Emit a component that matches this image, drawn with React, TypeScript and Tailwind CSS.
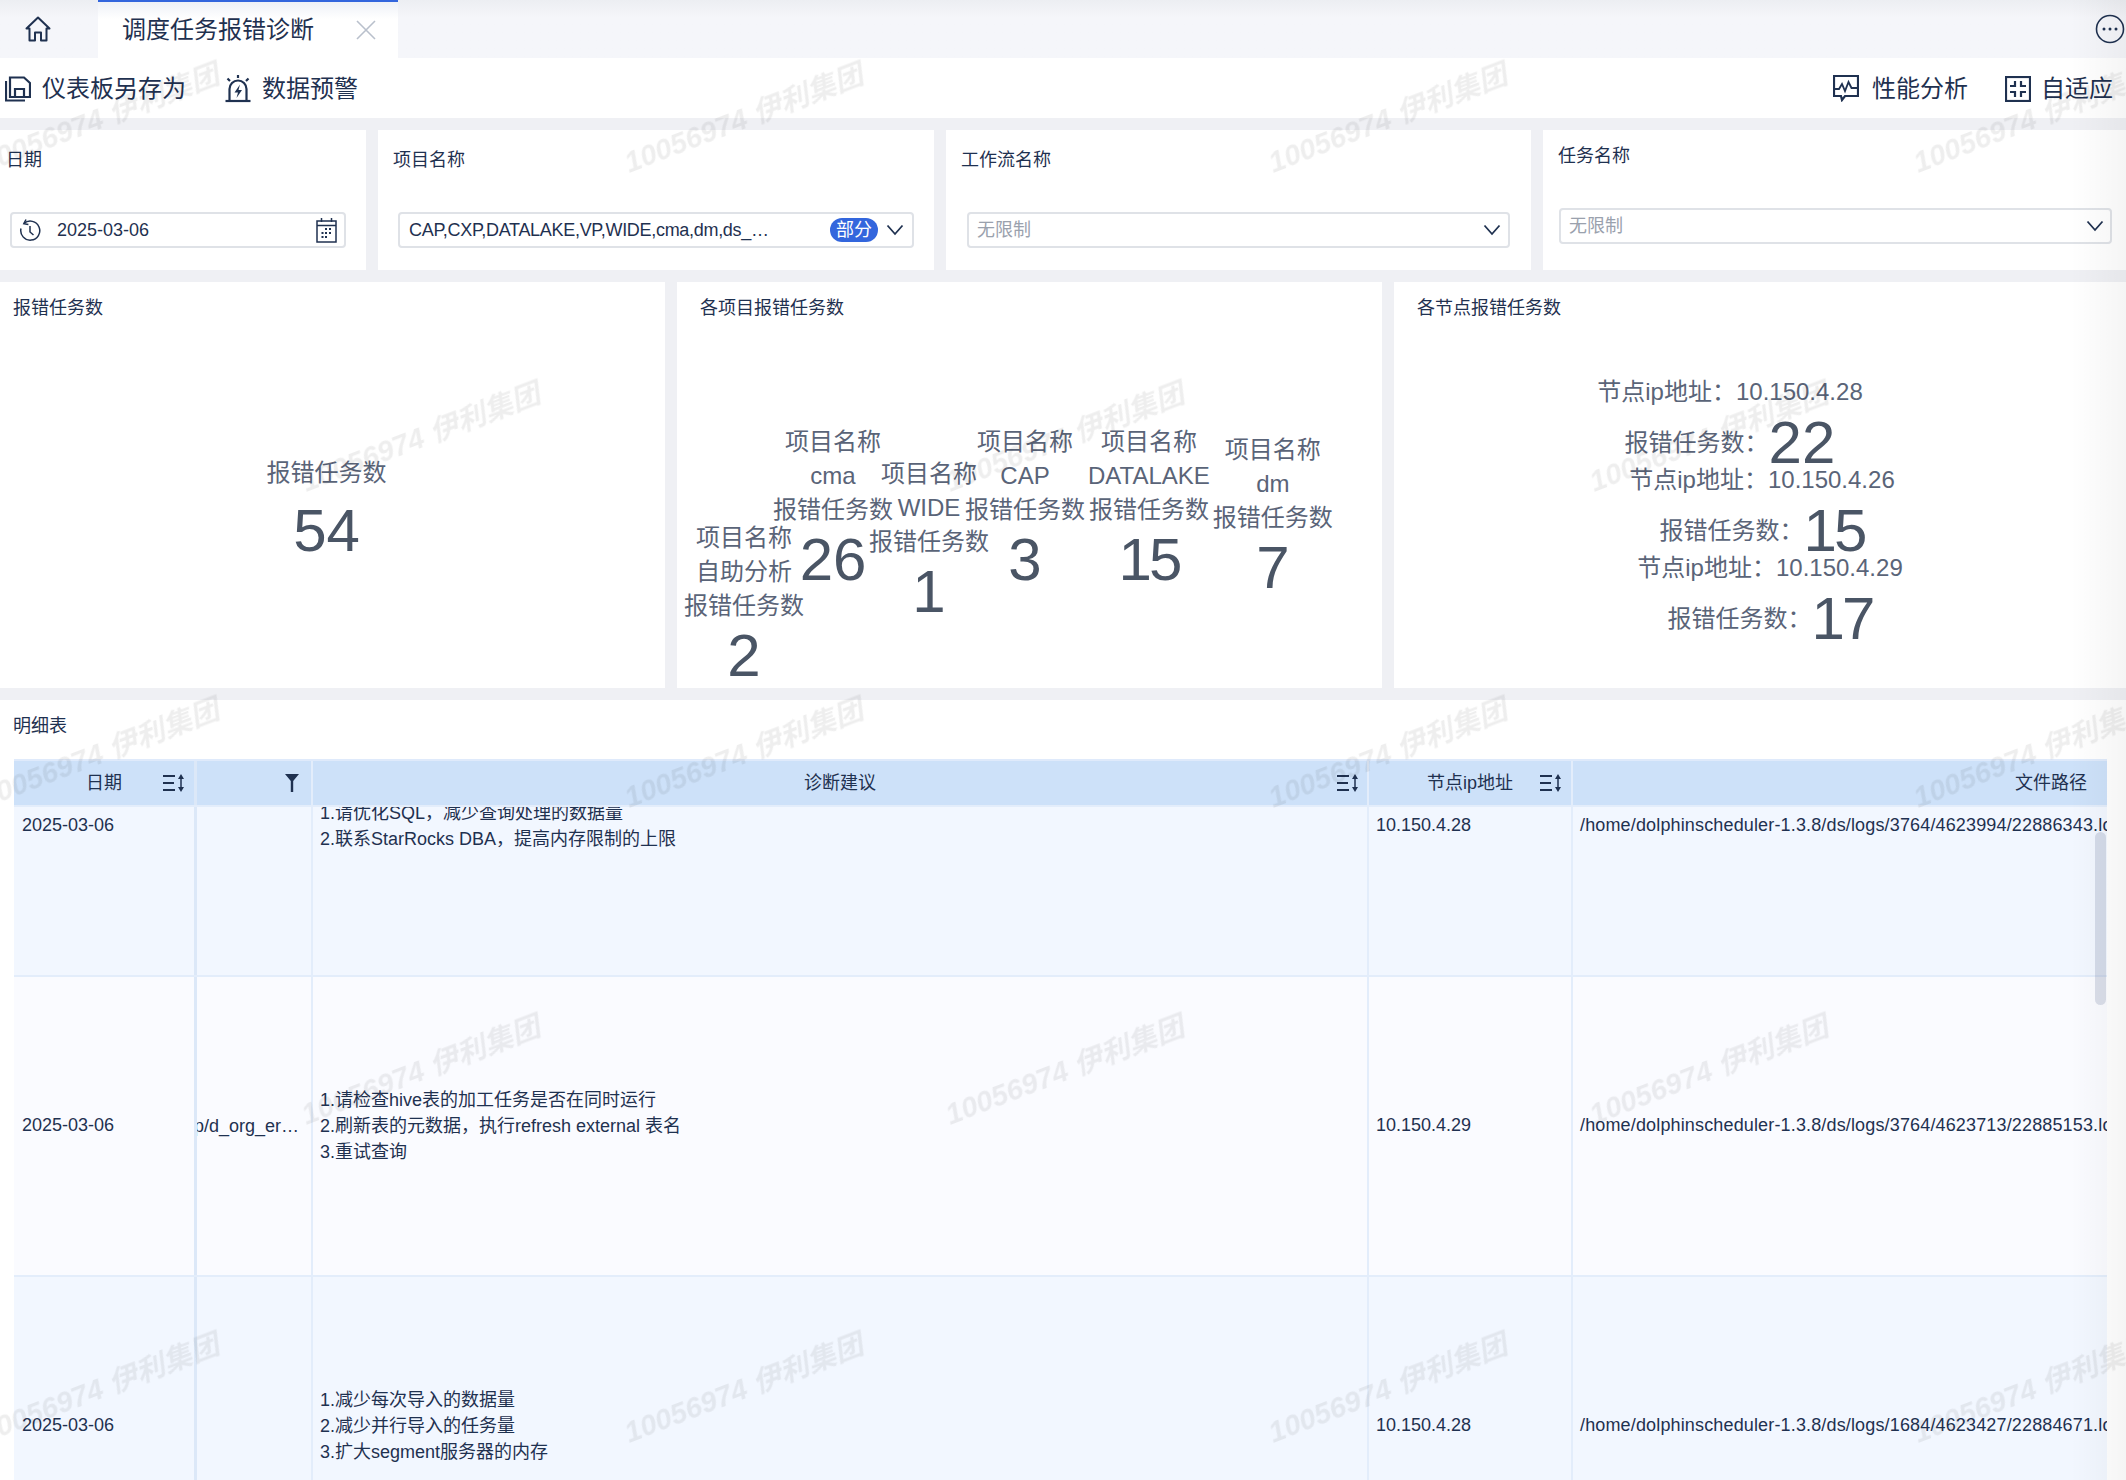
import React from 'react';

const INK = '#1f3150';

const HomeIcon = () => (
  <svg width="28" height="28" viewBox="0 0 28 28" fill="none" stroke={INK} strokeWidth="2">
    <path d="M2.5 13.5 14 2.5l11.5 11H22.5v12h-5.5v-8h-6v8H5.500v-12z" strokeLinejoin="round" />
  </svg>
);

const CloseIcon = () => (
  <svg width="20" height="20" viewBox="0 0 20 20" stroke="#b9c0cc" strokeWidth="1.6">
    <path d="M1 1l18 18M19 1 1 19" />
  </svg>
);

const MoreIcon = () => (
  <svg width="30" height="30" viewBox="0 0 30 30" fill="none">
    <circle cx="15" cy="15" r="13.500" stroke={INK} strokeWidth="1.600" />
    <circle cx="9" cy="15" r="1.500" fill={INK} />
    <circle cx="15" cy="15" r="1.500" fill={INK} />
    <circle cx="21" cy="15" r="1.500" fill={INK} />
  </svg>
);

const SaveAsIcon = () => (
  <svg width="26" height="26" viewBox="0 0 26 26" fill="none" stroke={INK} strokeWidth="2.200">
    <path d="M5 21V1.500h14L25 7v14z" />
    <path d="M10 21v-8h9v8" />
    <path d="M1 5v19.500h19" />
  </svg>
);

const AlarmIcon = () => (
  <svg width="26" height="28" viewBox="0 0 26 28" fill="none" stroke={INK} strokeWidth="2.200">
    <path d="M4.500 25V14a8.500 8.500 0 0 1 17 0v11" />
    <path d="M0.500 26h25" />
    <path d="M13 0v3M2.500 3.500 5 6M23.500 3.500 21 6" />
    <path d="M15 9.500 9.500 17.500h3.500L11.500 23l5.500-8h-3.500z" fill={INK} stroke="none" />
  </svg>
);

const PerfIcon = () => (
  <svg width="26" height="27" viewBox="0 0 26 27" fill="none" stroke={INK} strokeWidth="2.200">
    <path d="M1 1h24v20H12l-3 4-1-4H1z" />
    <path d="M2 14h4l3-5 3 7 3.500-9 3 6H25" strokeWidth="1.800" />
  </svg>
);

const FitIcon = () => (
  <svg width="26" height="26" viewBox="0 0 26 26" fill="none" stroke={INK} strokeWidth="2.200">
    <rect x="1" y="1" width="24" height="24" />
    <path d="M10 5v5H5M16 5v5h5M10 21v-5H5M16 21v-5h5" />
  </svg>
);

const HistoryIcon = () => (
  <svg width="22" height="24" viewBox="0 0 22 24" fill="none" stroke={INK} strokeWidth="1.500">
    <path d="M5 5.500a9.500 9.500 0 1 1-3 5" />
    <path d="M7 1.500 4.800 5.800l4.600.8" />
    <path d="M11 8v6l3.500 3" />
  </svg>
);

const CalendarIcon = () => (
  <svg width="21" height="26" viewBox="0 0 21 26" fill="none" stroke={INK} strokeWidth="1.500">
    <rect x="1" y="4" width="19" height="21" />
    <path d="M1 8.500h19M5.500 1v4M15.500 1v4" />
    <path d="M9 12h2M13 12h2M5.500 16h2M9 16h2M13 16h2M5.500 20h2M9 20h2" strokeWidth="2" />
  </svg>
);

const Chevron = () => (
  <svg width="18" height="12" viewBox="0 0 18 12" fill="none" stroke={INK} strokeWidth="1.800">
    <path d="M1.500 1.500 9 10l7.500-8.500" />
  </svg>
);

const SortIcon = () => (
  <svg width="22" height="18" viewBox="0 0 22 18" fill="none" stroke={INK} strokeWidth="2">
    <path d="M0 2h12M0 9h11M0 16h12" />
    <path d="M18 5v9" strokeWidth="1.500" />
    <path d="M18 0l3 5h-6zM18 18l3-5h-6z" fill={INK} stroke="none" />
  </svg>
);

const FilterIcon = () => (
  <svg width="14" height="18" viewBox="0 0 14 18" fill={INK}>
    <path d="M0 0h14L8.200 7v11H5.800V7z" />
  </svg>
);

const Watermarks = () => {
  const marks = [
    'left-[100px] top-[119px]', 'left-[744px] top-[119px]', 'left-[1388px] top-[119px]', 'left-[2033px] top-[119px]',
    'left-[421px] top-[438px]', 'left-[1065px] top-[438px]', 'left-[1709px] top-[438px]',
    'left-[100px] top-[754px]', 'left-[744px] top-[754px]', 'left-[1388px] top-[754px]', 'left-[2033px] top-[754px]',
    'left-[421px] top-[1071px]', 'left-[1065px] top-[1071px]', 'left-[1709px] top-[1071px]',
    'left-[100px] top-[1389px]', 'left-[744px] top-[1389px]', 'left-[1388px] top-[1389px]', 'left-[2033px] top-[1389px]',
  ];
  return (
    <div className="absolute inset-0 overflow-hidden pointer-events-none">
      {marks.map((pos) => (
        <span
          key={pos}
          className={`absolute ${pos} -translate-x-1/2 -translate-y-1/2 -rotate-[21deg] whitespace-nowrap italic font-bold text-[29px] text-black/[0.065] blur-[0.5px]`}
        >
          10056974 伊利集团
        </span>
      ))}
    </div>
  );
};

const SelectBox = ({ children, className }: { children: React.ReactNode; className: string }) => (
  <div className={`h-9 flex items-center border-2 border-[#dfe2e7] rounded-[4px] bg-white ${className}`}>{children}</div>
);

const projects = [
  { name: '自助分析', count: '2', cls: 'mt-[187px]', numCls: '' },
  { name: 'cma', count: '26', cls: 'mt-[91px] -ml-[31px]', numCls: '' },
  { name: 'WIDE', count: '1', cls: 'mt-[123px] -ml-[24px]', numCls: '' },
  { name: 'CAP', count: '3', cls: 'mt-[91px] -ml-[24px]', numCls: '' },
  { name: 'DATALAKE', count: '15', cls: 'mt-[91px] ml-[3px]', numCls: 'tracking-[-3px]' },
  { name: 'dm', count: '7', cls: 'mt-[99px] ml-[3px]', numCls: '' },
];

const nodes = [
  { ip: '10.150.4.28', count: '22', cls: 'mr-[60px]', numCls: '' },
  { ip: '10.150.4.26', count: '15', cls: 'ml-[4px]', numCls: 'tracking-[-3px]' },
  { ip: '10.150.4.29', count: '17', cls: 'ml-[20px]', numCls: 'tracking-[-3px]' },
];

const rows = [
  {
    bg: 'bg-[#f2f7ff]',
    task: '',
    ip: '10.150.4.28',
    path: '/home/dolphinscheduler-1.3.8/ds/logs/3764/4623994/22886343.log',
    tips: ['1.请优化SQL，减少查询处理的数据量', '2.联系StarRocks DBA，提高内存限制的上限'],
  },
  {
    bg: 'bg-[#fafbff]',
    task: 'p/d_org_er…',
    ip: '10.150.4.29',
    path: '/home/dolphinscheduler-1.3.8/ds/logs/3764/4623713/22885153.log',
    tips: ['1.请检查hive表的加工任务是否在同时运行', '2.刷新表的元数据，执行refresh external 表名', '3.重试查询'],
  },
  {
    bg: 'bg-[#f2f7ff]',
    task: '',
    ip: '10.150.4.28',
    path: '/home/dolphinscheduler-1.3.8/ds/logs/1684/4623427/22884671.log',
    tips: ['1.减少每次导入的数据量', '2.减少并行导入的任务量', '3.扩大segment服务器的内存'],
  },
];

const gridCols = 'grid grid-cols-[183px_116px_1056px_204px_534px]';

export default function App() {
  return (
    <div className="relative w-[2126px] h-[1480px] overflow-hidden flex flex-col bg-[#eff0f4] text-[#1f3150] font-['Liberation_Sans','Noto_Sans_CJK_SC',sans-serif]">
      {/* tab bar */}
      <div className="h-[58px] shrink-0 flex items-center bg-gradient-to-b from-[#eceef2] via-[#f5f6fa] via-30% to-[#f5f6fa]">
        <div className="w-[98px] pl-[24px] flex items-center">
          <HomeIcon />
        </div>
        <div className="w-[300px] h-full flex items-center bg-gradient-to-b from-[#eef1f7] via-white via-30% to-white border-t-2 border-[#3366dd]">
          <span className="ml-[24px] text-[24px] leading-none">调度任务报错诊断</span>
          <span className="ml-[42px] flex"><CloseIcon /></span>
        </div>
        <div className="ml-auto mr-[1px] flex"><MoreIcon /></div>
      </div>

      {/* toolbar */}
      <div className="h-[60px] shrink-0 bg-white flex items-center pl-[5px] pr-[13px] pt-[1px] text-[24px]">
        <SaveAsIcon />
        <span className="ml-[11px]">仪表板另存为</span>
        <span className="ml-[39px] flex"><AlarmIcon /></span>
        <span className="ml-[11px]">数据预警</span>
        <span className="ml-auto flex"><PerfIcon /></span>
        <span className="ml-[13px]">性能分析</span>
        <span className="ml-[37px] flex"><FitIcon /></span>
        <span className="ml-[10px]">自适应</span>
      </div>

      {/* filters */}
      <div className="h-[140px] shrink-0 mt-[12px] flex gap-[12px] text-[18px]">
        <div className="w-[366px] bg-white pt-[18px] pr-[20px]">
          <div className="h-6 leading-6 pl-[6px]">日期</div>
          <SelectBox className="mt-[40px] ml-[10px] pl-[7px] pr-[7px]">
            <HistoryIcon />
            <span className="ml-[16px]">2025-03-06</span>
            <span className="ml-auto flex"><CalendarIcon /></span>
          </SelectBox>
        </div>
        <div className="w-[556px] bg-white pt-[18px] px-[20px]">
          <div className="h-6 leading-6 -ml-[5px]">项目名称</div>
          <SelectBox className="mt-[40px] pl-[9px] pr-[8px]">
            <span className="whitespace-nowrap tracking-[-0.3px]">CAP,CXP,DATALAKE,VP,WIDE,cma,dm,ds_…</span>
            <span className="ml-auto w-12 h-6 rounded-full bg-[#3366dd] text-white text-center leading-6">部分</span>
            <span className="ml-[8px] flex"><Chevron /></span>
          </SelectBox>
        </div>
        <div className="w-[585px] bg-white pt-[18px] px-[21px]">
          <div className="h-6 leading-6 -ml-[6px]">工作流名称</div>
          <SelectBox className="mt-[40px] pl-[8px] pr-[7px] justify-between">
            <span className="text-[#9aa1ad]">无限制</span>
            <Chevron />
          </SelectBox>
        </div>
        <div className="flex-1 bg-white pt-[14px] pl-[16px] pr-[14px]">
          <div className="h-6 leading-6 -ml-[1px]">任务名称</div>
          <SelectBox className="mt-[40px] pl-[8px] pr-[6px] justify-between">
            <span className="text-[#9aa1ad]">无限制</span>
            <Chevron />
          </SelectBox>
        </div>
      </div>

      {/* kpi cards */}
      <div className="h-[406px] shrink-0 mt-[12px] flex gap-[12px]">
        <div className="w-[665px] bg-white">
          <div className="h-[52px] flex items-center pl-[13px] text-[18px]">报错任务数</div>
          <div className="mt-[122px] flex flex-col items-center pr-[12px] text-[#5a6478]">
            <div className="text-[24px] leading-[34px]">报错任务数</div>
            <div className="text-[60px] leading-[82px] text-[#4a5565]">54</div>
          </div>
        </div>
        <div className="w-[705px] bg-white">
          <div className="h-[52px] flex items-center pl-[23px] text-[18px]">各项目报错任务数</div>
          <div className="flex items-start pl-[7px] text-[#5a6478]">
            {projects.map((p) => (
              <div key={p.name} className={`flex flex-col items-center whitespace-nowrap text-[24px] leading-[34px] ${p.cls}`}>
                <div>项目名称</div>
                <div>{p.name}</div>
                <div>报错任务数</div>
                <div className={`text-[60px] leading-[66px] text-[#4a5565] ${p.numCls}`}>{p.count}</div>
              </div>
            ))}
          </div>
        </div>
        <div className="flex-1 bg-white">
          <div className="h-[52px] flex items-center pl-[23px] text-[18px]">各节点报错任务数</div>
          <div className="pt-[41px] flex flex-col items-center text-[#5a6478] text-[24px]">
            {nodes.map((n) => (
              <div key={n.ip} className={`flex flex-col items-center h-[88px] ${n.cls}`}>
                <div className="leading-[34px]">节点ip地址：{n.ip}</div>
                <div className="flex items-center h-[54px] mt-[7px]">
                  <span>报错任务数：</span>
                  <span className={`text-[60px] leading-none text-[#4a5565] ${n.numCls}`}>{n.count}</span>
                </div>
              </div>
            ))}
          </div>
        </div>
      </div>

      {/* detail table */}
      <div className="flex-1 min-h-0 mt-[12px] bg-white pl-[14px] pr-[19px] flex flex-col text-[18px]">
        <div className="h-[52px] shrink-0 flex items-center -ml-[1px]">明细表</div>
        <div className="mt-[7px] flex-1 min-h-0 flex flex-col overflow-hidden">
          <div className={`${gridCols} h-[48px] shrink-0 bg-[#cde1f9] border-t-2 border-[#dfeafb] border-b-2 border-b-[#e3edfb]`}>
            <div className="relative flex items-center justify-center border-r-[3px] border-[#dce8f8]">
              日期
              <span className="absolute right-[9px] flex"><SortIcon /></span>
            </div>
            <div className="flex items-center justify-end pr-[12px] border-r-2 border-[#e3edfb]">
              <FilterIcon />
            </div>
            <div className="relative flex items-center justify-center border-r-2 border-[#e3edfb]">
              诊断建议
              <span className="absolute right-[8px] flex"><SortIcon /></span>
            </div>
            <div className="relative flex items-center justify-center border-r-2 border-[#e3edfb]">
              节点ip地址
              <span className="absolute right-[9px] flex"><SortIcon /></span>
            </div>
            <div className="flex items-center justify-end pr-[20px]">文件路径</div>
          </div>
          <div className="relative flex-1 min-h-0 overflow-hidden">
            <div className="-mt-[130px]">
              {rows.map((r, i) => (
                <div key={i} className={`${gridCols} h-[300px] border-b-2 border-[#e3edfb] ${r.bg}`}>
                  <div className="flex items-center pl-[8px] pb-[1px] border-r-[3px] border-[#dce8f8]">2025-03-06</div>
                  <div className="flex items-center overflow-hidden border-r-2 border-[#e3edfb] whitespace-nowrap">
                    <span className="-ml-[3px]">{r.task}</span>
                  </div>
                  <div className="flex flex-col justify-center pl-[7px] border-r-2 border-[#e3edfb] leading-[26px]">
                    {r.tips.map((t) => (
                      <div key={t}>{t}</div>
                    ))}
                  </div>
                  <div className="flex items-center pl-[7px] pb-[1px] border-r-2 border-[#e3edfb]">{r.ip}</div>
                  <div className="flex items-center pl-[7px] pb-[1px] overflow-hidden whitespace-nowrap tracking-[0.15px]">{r.path}</div>
                </div>
              ))}
            </div>
            {/* vertical scrollbar */}
            <div className="absolute right-[1px] top-[25px] w-[11px] h-[173px] rounded-full bg-[#7c88a8]/25" />
          </div>
        </div>
      </div>

      <Watermarks />
      {/* soft fade on the right edge */}
      <div className="absolute top-0 bottom-0 right-0 w-[56px] pointer-events-none bg-gradient-to-r from-transparent to-black/[0.04]" />
    </div>
  );
}
